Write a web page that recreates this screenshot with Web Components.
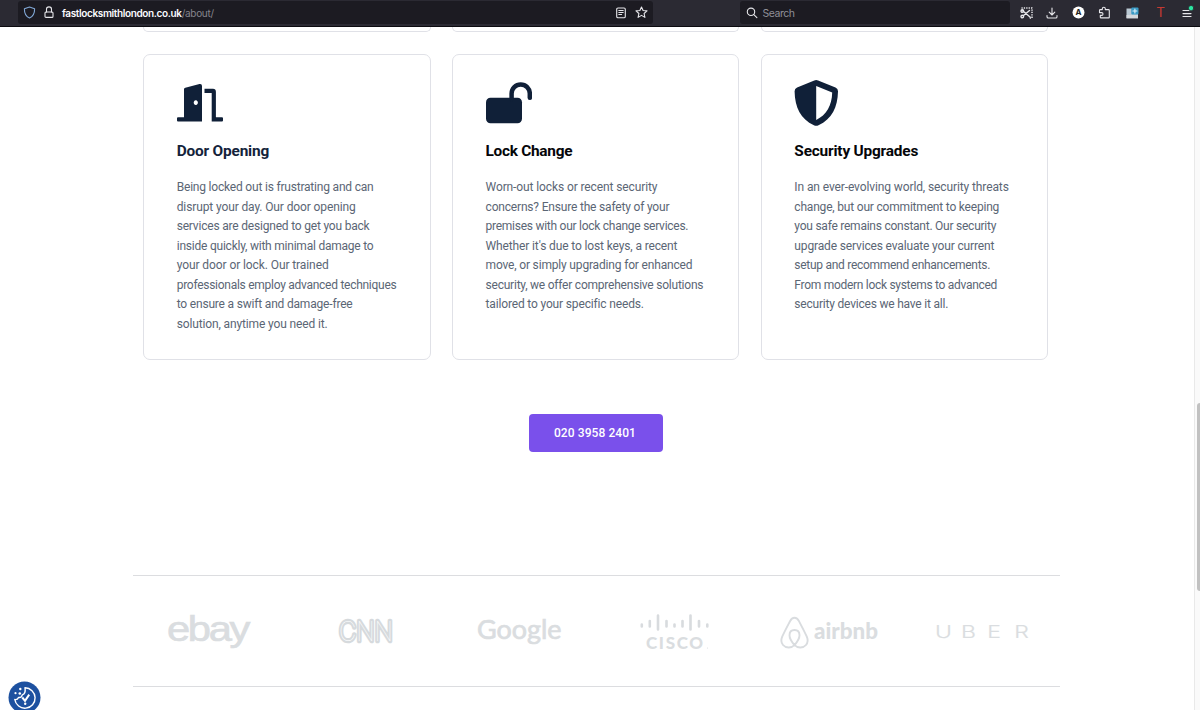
<!DOCTYPE html>
<html lang="en"><head><meta charset="utf-8"><title>Fast Locksmith London – About</title>
<style>html,body{margin:0;height:100%;overflow:hidden;background:#fff;font-family:Roboto,sans-serif}</style></head>
<body><app-shell></app-shell>
<script>
const define=(name,html,after)=>customElements.define(name,class extends HTMLElement{
 connectedCallback(){ if(this.shadowRoot)return;
  const t=document.createElement('template');t.innerHTML=html;
  this.attachShadow({mode:'open'}).append(t.content.cloneNode(true)); if(after)after(this,this.shadowRoot);}
});
/* One line of text, tracked so that it spans the width given in "w". */
define('fit-line','<style>:host{display:block;white-space:nowrap}span{display:inline-block}</style><span></span>',(h,r)=>{
 const s=r.querySelector('span'),n=h.getAttribute('text');s.textContent=n;
 const w=s.getBoundingClientRect().width;
 if(w)s.style.letterSpacing=((+h.getAttribute('w')-w)/(n.length-1))+'px';
});
define('browser-bar',`<style>
:host{display:flex;box-sizing:border-box;height:27px;flex:none;background:#2b2a33;border-bottom:1px solid #0c0b10;padding:1px 0 2px 18px;font-family:Inter,sans-serif;font-size:10px;color:#fbfbfe;align-items:stretch}
.f{background:#1c1b22;border-radius:3px;display:flex;flex:none;align-items:center;box-sizing:border-box}
.u{width:635px;padding:0 5px 0 5px}.s{width:270px;margin-left:87px;padding-left:6px;color:#8f8f98;font-size:10.5px}
svg{display:block;flex:none;fill:none;stroke:#e6e6ea;stroke-width:1.1;stroke-linejoin:round;stroke-linecap:round}
.dim{color:#85848c;flex:1}.t{display:grid;flex:none;grid-template-columns:26px 26px 26px 27px 28px 28px 26px;justify-items:center;align-items:center;padding-left:3px}
.u fit-line,.s fit-line{position:relative;top:.5px}
</style>
<div class="f u">
<svg width="13" height="13" viewBox="0 0 13 13" style="stroke:#82a9d8"><path d="M6.5 1 11.6 2.7C11.7 7.4 9.8 10.5 6.5 12 3.2 10.5 1.3 7.4 1.4 2.7Z"/></svg>
<svg width="10" height="13" viewBox="0 0 10 13" style="margin:0 8px 0 8px"><path d="M2.5 6V3.2a2.5 2.3 0 0 1 5 0V6"/><rect x="1" y="6" width="8" height="5.4" rx="1"/></svg>
<fit-line w="120" text="fastlocksmithlondon.co.uk" style="font-weight:600"></fit-line><div class="dim"><fit-line w="32.5" text="/about/"></fit-line></div>
<svg width="12" height="12" viewBox="0 0 12 12" style="margin-right:8px"><rect x="1.7" y="1" width="8.6" height="9.8" rx="1.3"/><path d="M3.8 3.5h4.4M3.8 5.5h4.4M3.8 7.5h2.8"/></svg>
<svg width="13" height="13" viewBox="0 0 13 13"><path d="m6.5 1 1.6 3.5 3.9.4-2.9 2.6.8 3.9-3.4-2-3.4 2 .8-3.9L1 4.9l3.9-.4Z"/></svg>
</div>
<div class="f s"><svg width="12" height="12" viewBox="0 0 12 12" style="margin-right:4.5px"><circle cx="5" cy="4.8" r="3.7"/><path d="m7.8 7.6 3.1 3.1"/></svg><fit-line w="32.5" text="Search"></fit-line></div>
<div class="t">
<svg width="13" height="12" viewBox="0 0 13 12"><path d="M2 4V1h10v10H9" stroke-dasharray="1.3 1.1" stroke-linecap="butt" stroke-width="1.5"/><path d="m3.5 8.5 6-5M3 4l7 6" stroke-width="1.4"/><circle cx="2.3" cy="4" r="1.3" stroke-width="1.4"/><circle cx="2.3" cy="9.5" r="1.3" stroke-width="1.4"/></svg>
<svg width="12" height="12" viewBox="0 0 12 12"><path d="M6 1v6.800M3.200 5.200 6 8l2.800-2.800M1 8.500v1.200q0 1.300 1.300 1.300h7.400q1.300 0 1.300-1.300V8.500"/></svg>
<svg width="13" height="13" viewBox="0 0 13 13" style="stroke:none"><circle cx="6.500" cy="6.500" r="6" fill="#fff"/><text x="6.500" y="9.300" text-anchor="middle" font-size="8" font-weight="700" fill="#222">A</text></svg>
<svg width="13" height="13" viewBox="0 0 13 13"><path d="M4.300 3.600V2.800a1.500 1.500 0 0 1 3 0v.8h3.200q.8 0 .8.8v6.800q0 .7-.7.7H3q-.7 0-.7-.7V9.400h1.300a1.400 1.400 0 0 0 0-2.800H1.500V4.400q0-.8.8-.8Z"/></svg>
<svg width="13" height="12" viewBox="0 0 13 12" style="stroke:none"><path d="M.5 1.500h5l1 1.300H12v8.500H.5Z" fill="#b9c8d3"/><path d="M.5 8h11.500v3.300H.5Z" fill="#d4d8dc"/><rect x="5.300" y=".5" width="7.200" height="7" rx="1" fill="#3a9bc6"/><path d="M8.900 2v4M6.900 4h4" stroke="#dff3fb" stroke-width="1.100"/></svg>
<svg width="15" height="19" viewBox="0 0 15 19" style="stroke:none;overflow:visible"><text x="7.500" y="14" text-anchor="middle" font-size="13.500" fill="#c43a32">T</text></svg>
<svg width="13" height="15" viewBox="0 0 13 15"><path d="M2 5.500h8M2 8.600h8M2 11.500h8" stroke-width="1.200"/><circle cx="10.100" cy="3.100" r="2.700" fill="#2ce5a1" stroke="#2b2a33" stroke-width=".8"/></svg>
</div>`);
define('service-card',`<style>:host{display:block;box-sizing:border-box;border:1px solid #e0e1e7;border-radius:7px;background:#fff;padding:25px 32.500px 0;min-width:0}
::slotted(svg){display:block;width:46px;height:46px;margin-bottom:15px;fill:#102038}
.h{font-size:15.400px;line-height:20px;font-weight:700;margin-bottom:17px}
.p{font-size:12px;line-height:19.580px;color:#5b6675}</style><slot></slot><div class="h"></div><div class="p"></div>`,(h,r)=>{
 const line=(s)=>{const [w,t]=s.split('|');const e=document.createElement('fit-line');e.setAttribute('w',w);e.setAttribute('text',t);return e};
 const hd=r.querySelector('.h');hd.style.color=h.getAttribute('color')||'#050609';
 hd.append(line(h.getAttribute('heading')));
 h.getAttribute('lines').split(';').forEach(s=>r.querySelector('.p').append(line(s)));
});
define('call-button',`<style>:host{display:flex;box-sizing:border-box;width:134px;height:38px;padding:0 2px 1px 0;border-radius:4px;background:#7a50eb;color:#fff;align-items:center;justify-content:center;font:500 12px Roboto,sans-serif}</style><fit-line w="82" text="020 3958 2401"></fit-line>`);
define('logo-row',`<style>:host{display:flex;box-sizing:border-box;width:927px;height:112px;border-top:1px solid #dcdde0;border-bottom:1px solid #dcdde0;padding:32px 0 0 35.500px;align-items:flex-start}
svg{display:block;overflow:visible;fill:#dadde0;flex:none}</style>
<svg width="84" height="46"><text x="-1" y="32.500" font-family="Liberation Sans" font-size="35.500" letter-spacing="-2" textLength="81" lengthAdjust="spacingAndGlyphs" stroke="#dadde0" stroke-width=".7">ebay</text></svg>
<svg width="57" height="46" style="margin-left:86px"><text x="1" y="32.500" font-family="Inter" font-weight="100" font-size="27" textLength="54" lengthAdjust="spacingAndGlyphs" style="fill:#fff;stroke:#d6dadd;stroke-width:4.600;paint-order:stroke;stroke-linejoin:round">CNN</text></svg>
<svg width="84" height="46" style="margin-left:83px"><text x="-1" y="30.500" font-family="Lato" font-size="26.500" textLength="84.500" lengthAdjust="spacingAndGlyphs" stroke="#dadde0" stroke-width=".7">Google</text></svg>
<svg width="70" height="46" style="margin-left:78px"><g stroke="#d8dbde" stroke-width="2.600" stroke-linecap="round"><path d="M1.800 16.500v2M9.800 13v5.500M18 7.500v14M26.500 13v5.500M34.500 16.500v2M42.500 13v5.500M50.500 7.500v14M59 13v5.500M67.300 16.500v2"/></g><text x="6" y="41" font-family="Lato" font-weight="900" font-size="17" textLength="57" lengthAdjust="spacing">CISCO</text><circle cx="67.500" cy="40" r=".6"/></svg>
<svg width="98" height="46" style="margin-left:70px"><path d="M14.500 37C10 32 9.500 29.500 9.500 27.200C9.500 24 11.500 22 14.500 22S19.500 24 19.500 27.200C19.500 29.500 19 32 14.500 37C11.500 40.500 5.500 40 3 37C.5 34 1 31.500 2.200 28.700C4.500 23.500 7.500 18 10 13.200C11 11.200 12 9.800 14.500 9.800S18 11.200 19 13.200C21.500 18 24.500 23.500 26.800 28.700C28 31.500 28.500 34 26 37C23.500 40 17.500 40.500 14.500 37Z" fill="none" stroke="#d9dcdf" stroke-width="1.900"/><text x="34" y="31" font-family="Lato" font-weight="900" font-size="22" textLength="64" lengthAdjust="spacingAndGlyphs">airbnb</text></svg>
<svg width="94" height="46" style="margin-left:58px"><text transform="scale(1.350 1)" x="-.8 18.600 38 58" y="30" font-family="Inter" font-weight="300" font-size="17" stroke="#dadde0" stroke-width=".2">UBER</text></svg>`);
define('app-shell',`<style>
:host{display:flex;flex-direction:column;width:1200px;height:710px;overflow:hidden;position:relative}
.body{display:flex;flex:1;min-height:0}.page{flex:1;display:flex;flex-direction:column;align-items:center;padding-right:2px;min-width:0}
.prev,.cards{display:grid;grid-template-columns:repeat(3,1fr);gap:21.500px;width:905px;flex:none;margin-right:.6px}
.prev{height:5px}.prev div{border:1px solid #e0e1e7;border-top:0;border-radius:0 0 7px 7px;box-sizing:border-box}
.cards{height:306px;margin-top:22px}call-button{margin-top:54px;flex:none}logo-row{margin-top:123px;flex:none}
.bar{width:6px;box-sizing:border-box;border-left:1px solid #e9e9e9;background:#fafafa;padding:376px 0 0 2px}
.bar div{height:188px;background:#c1c1c1;border-radius:3px 0 0 3px}
.cookie{position:absolute;left:8px;top:681px}</style>
<browser-bar></browser-bar>
<div class="body"><div class="page"><div class="prev"><div></div><div></div><div></div></div>
<div class="cards">
<service-card color="#14233b" heading="92.5|Door Opening" lines="197|Being locked out is frustrating and can;179|disrupt your day. Our door opening;193|services are designed to get you back;197|inside quickly, with minimal damage to;152|your door or lock. Our trained;220|professionals employ advanced techniques;176|to ensure a swift and damage-free;151|solution, anytime you need it.">
<svg viewBox="0 0 46 46"><path d="M1 37.300H7V9.300Q7 8 8.300 7.700L22.500 4.100Q25 3.700 25 6V41.500H1Q0 41.500 0 40.500V38.300Q0 37.300 1 37.300ZM18.800 20.200a2.100 2.400 0 1 0 .01 0ZM27.500 8.800H36Q38.900 8.800 38.900 11.700V37.300H45Q46 37.300 46 38.300V40.500Q46 41.500 45 41.500H34.700V13.100H27.500Z" fill-rule="evenodd"/></svg></service-card>
<service-card heading="87|Lock Change" lines="172|Worn-out locks or recent security;184|concerns? Ensure the safety of your;203|premises with our lock change services.;192|Whether it's due to lost keys, a recent;207|move, or simply upgrading for enhanced;218|security, we offer comprehensive solutions;158|tailored to your specific needs.">
<svg viewBox="0 0 46 46"><rect y="17.700" width="36" height="25.500" rx="4.500"/><path d="M25.600 19V13.500a9.100 9.100 0 0 1 18.200 0V17.800" fill="none" stroke="#102038" stroke-width="4.500" stroke-linecap="round"/></svg></service-card>
<service-card heading="124|Security Upgrades" lines="214.5|In an ever-evolving world, security threats;205|change, but our commitment to keeping;202|you safe remains constant. Our security;200|upgrade services evaluate your current;196|setup and recommend enhancements.;203|From modern lock systems to advanced;154|security devices we have it all.">
<svg viewBox="0 0 46 46"><path d="M20.300.4Q22.200-.4 24.100.4L41.500 7.500Q44.100 8.700 44 11.500C43.600 27 38 39.300 24.500 45.200Q22.200 46.200 19.900 45.200C6.500 39.300.9 27 .6 11.500Q.5 8.700 3.100 7.500ZM22.200 6.100V39.900C32.500 35 37.900 25.500 38.200 12.500Z" fill-rule="evenodd"/></svg></service-card>
</div><call-button></call-button><logo-row></logo-row></div>
<div class="bar"><div></div></div></div>
<svg class="cookie" width="33" height="33" viewBox="0 0 33 33"><circle cx="16.500" cy="16.500" r="16" fill="#1d51a0"/><path d="M17 6.800A10.200 10.200 0 1 1 6.800 18.500Q9.500 19 10.500 16.500Q13.500 17 14.300 13.800Q18 12.500 17 6.800Z" fill="none" stroke="#fff" stroke-width="1.400" stroke-linejoin="round"/><path d="m14.300 16.500 2.700 3.300 4.200-6.200" fill="none" stroke="#fff" stroke-width="2"/><g fill="#fff"><circle cx="12.300" cy="8" r="1.200"/><circle cx="7.500" cy="12.200" r="1.100"/><circle cx="11.800" cy="12.500" r="1.300"/><circle cx="17.200" cy="22.800" r="1.200"/></g></svg>`);
</script></body></html>
